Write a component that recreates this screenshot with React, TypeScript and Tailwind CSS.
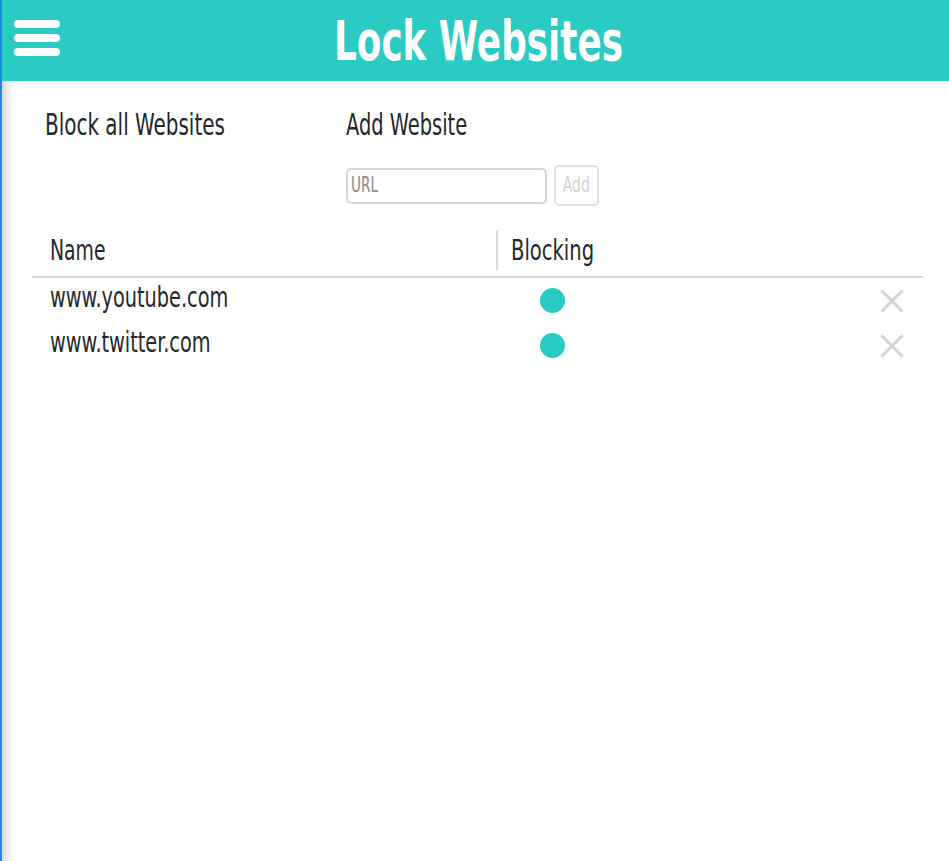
import React from "react";

const F = { fontFamily: '"DejaVu Sans Condensed", "DejaVu Sans", sans-serif' };

function T({ children, className = "scale-x-[0.74]" }: { children: React.ReactNode; className?: string }) {
  return <span className={"inline-block whitespace-nowrap origin-left " + className}>{children}</span>;
}

function XIcon() {
  return (
    <svg width="24" height="24" viewBox="0 0 24 24" fill="none">
      <path d="M1.5 1.5 L22.5 22.5 M22.5 1.5 L1.5 22.5" stroke="#d4d4d4" strokeWidth="3" />
    </svg>
  );
}

export default function App() {
  const sites = ["www.youtube.com", "www.twitter.com"];
  return (
    <div className="relative w-[949px] h-[861px] bg-white overflow-hidden text-[#24272b]" style={F}>
      <div className="absolute left-0 top-0 bottom-0 w-[2px] bg-[#1e88e5] z-20" />
      <div className="absolute left-[2px] top-[81px] bottom-0 w-[12px] bg-gradient-to-r from-[#dcdcdc] to-transparent z-10" />
      <header className="h-[81px] bg-[#29cbc3] flex items-center relative">
        <div className="absolute left-[14px] top-[20px] flex flex-col gap-[6px]">
          <div className="w-[46px] h-[8px] rounded-full bg-white" />
          <div className="w-[46px] h-[8px] rounded-full bg-white" />
          <div className="w-[46px] h-[8px] rounded-full bg-white" />
        </div>
        <h1 className="w-full text-center text-white font-bold text-[56px] leading-[56px] pl-[7px]">
          <span className="inline-block whitespace-nowrap scale-x-[0.71]">Lock Websites</span>
        </h1>
      </header>
      <div className="px-[32px] pt-[27px]">
        <div className="flex">
          <div className="w-[314px] pl-[13px] text-[30px] leading-[34px]"><T>Block all Websites</T></div>
          <div className="flex flex-col">
            <div className="text-[30px] leading-[34px]"><T className="scale-x-[0.72]">Add Website</T></div>
            <div className="flex items-center gap-[7px] mt-[23px]">
              <label className="relative block">
                <input
                  aria-label="URL"
                  className="block w-[201px] h-[36px] border-2 border-[#d6d6d6] rounded-[5px] px-[4px] text-[20px] outline-none bg-white"
                  style={F}
                />
                <span className="absolute left-[5px] top-0 h-[36px] flex items-center text-[20.5px] text-[#8c8c8c] pointer-events-none">
                  <T>URL</T>
                </span>
              </label>
              <button className="h-[41px] w-[45px] border-2 border-[#e0e0e0] rounded-[5px] text-[21px] text-[#d3d3d3] flex items-center justify-center overflow-hidden" style={F}>
                <span className="inline-block scale-x-[0.74]">Add</span>
              </button>
            </div>
          </div>
        </div>
        <div className="mt-[24px] w-[891px]">
          <div className="flex items-start h-[48px] border-b-2 border-[#d9d9d9]">
            <div className="w-[466px] pl-[18px] text-[27.5px] leading-[40px] h-[40px] border-r-2 border-[#d9d9d9]"><T className="scale-x-[0.76]">Name</T></div>
            <div className="pl-[13px] text-[27.5px] leading-[40px]"><T className="scale-x-[0.79]">Blocking</T></div>
          </div>
          {sites.map((s) => (
            <div key={s} className="flex items-center h-[45px]">
              <div className="w-[508px] pl-[18px] text-[27.5px] leading-[32px] mb-[7px]"><T className="scale-x-[0.78]">{s}</T></div>
              <div className="w-[25px] h-[25px] rounded-full bg-[#27cbc3]" />
              <div className="flex-1 flex justify-end pr-[19px]"><XIcon /></div>
            </div>
          ))}
        </div>
      </div>
    </div>
  );
}
